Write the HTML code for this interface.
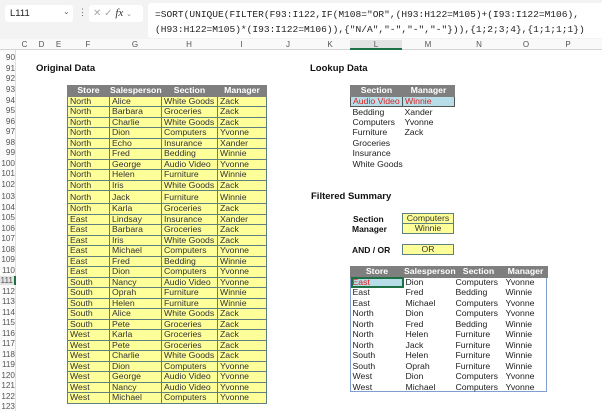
<!DOCTYPE html>
<html><head><meta charset="utf-8"><style>
*{margin:0;padding:0;box-sizing:border-box}
body{width:602px;height:411px;overflow:hidden;background:#fff;font-family:"Liberation Sans",Arial,sans-serif;position:relative;font-size:8.5px;color:#222}
.a{position:absolute}
.top{left:0;top:0;width:602px;height:39px;background:#f3f3f3}
.nb{left:5px;top:5px;width:68px;height:17px;background:#fff;border-radius:3px;font-size:9.5px;padding:3px 0 0 5px;color:#222}
.ib{left:89px;top:5px;width:54px;height:17px;background:#fff;border-radius:3px;color:#aaa;font-size:10px;padding:2px 0 0 4px}
.fb{left:148px;top:3px;width:454px;height:35px;background:#fff;border-radius:3px 0 0 3px}
.ft{left:155px;font-family:"Liberation Mono",monospace;font-size:9.55px;color:#222;white-space:pre}
.ch{left:0;top:39px;width:602px;height:11px;background:#f9f9f9;border-bottom:1px solid #d4d4d4}
.cl{top:40px;font-size:8px;color:#555;text-align:center}
.rh{left:0;top:50px;width:16px;height:361px;background:#fbfbfb;border-right:1px solid #e0e0e0}
.rn{left:0;width:15px;text-align:right;font-size:8.2px;color:#555}
table{border-collapse:collapse;position:absolute;table-layout:fixed}
td{font-size:8.7px;line-height:9px;padding:0 2px;white-space:nowrap;overflow:hidden}
.od td{background:#ffff99;border:1px solid #5f8080;color:#333}
th{background:#7f7f7f;color:#fff;font-weight:bold;font-size:8.7px;line-height:9px;text-align:center;border:1px solid #7f7f7f}
.title{font-weight:bold;font-size:9.5px;color:#111}
.lk td{color:#222;border:none}
.box{background:#ffff99;border:1px solid #5f8080;text-align:center;font-size:8.7px;line-height:9px;color:#333}
.lab{font-weight:bold;font-size:8.5px;color:#111}
.fs td{color:#222;border:none}
</style></head><body>
<div class="a top"></div>
<div class="a nb">L111<span style="position:absolute;left:58px;top:2px;color:#666;font-size:8px">⌄</span></div>
<div class="a" style="left:78px;top:7px;color:#666;font-size:9px">⋮</div>
<div class="a ib">✕ ✓ <i style="color:#333;font-family:'Liberation Serif',serif;font-size:11px">fx</i> <span style="font-size:7px;color:#888">⌄</span></div>
<div class="a fb"></div>
<div class="a ft" style="top:9px">=SORT(UNIQUE(FILTER(F93:I122,IF(M108="OR",(H93:H122=M105)+(I93:I122=M106),</div>
<div class="a ft" style="top:24px">(H93:H122=M105)*(I93:I122=M106)),{"N/A","-","-","-"})),{1;2;3;4},{1;1;1;1})</div>
<div class="a ch"></div>
<div class="a cl" style="left:16px;width:17px">C</div>
<div class="a cl" style="left:33px;width:17px">D</div>
<div class="a cl" style="left:50px;width:17px">E</div>
<div class="a cl" style="left:67px;width:42px">F</div>
<div class="a cl" style="left:109px;width:52px">G</div>
<div class="a cl" style="left:161px;width:56px">H</div>
<div class="a cl" style="left:217px;width:49px">I</div>
<div class="a cl" style="left:266px;width:44px">J</div>
<div class="a cl" style="left:310px;width:40px">K</div>
<div class="a cl" style="left:350px;width:52px;background:#e3e3e3;height:10px;border-bottom:2px solid #1e7145">L</div>
<div class="a cl" style="left:402px;width:52px">M</div>
<div class="a cl" style="left:454px;width:50px">N</div>
<div class="a cl" style="left:504px;width:44px">O</div>
<div class="a cl" style="left:548px;width:40px">P</div>
<div class="a rh"></div>
<div class="a rn" style="top:53px">90</div>
<div class="a rn" style="top:63.5px">91</div>
<div class="a rn" style="top:74px">92</div>
<div class="a rn" style="top:85px">93</div>
<div class="a rn" style="top:95.5px">94</div>
<div class="a rn" style="top:106px">95</div>
<div class="a rn" style="top:116.5px">96</div>
<div class="a rn" style="top:127px">97</div>
<div class="a rn" style="top:137.5px">98</div>
<div class="a rn" style="top:148px">99</div>
<div class="a rn" style="top:158.5px">100</div>
<div class="a rn" style="top:169px">101</div>
<div class="a rn" style="top:179.5px">102</div>
<div class="a rn" style="top:191.5px">103</div>
<div class="a rn" style="top:202.5px">104</div>
<div class="a rn" style="top:213px">105</div>
<div class="a rn" style="top:223.5px">106</div>
<div class="a rn" style="top:234px">107</div>
<div class="a rn" style="top:244.5px">108</div>
<div class="a rn" style="top:255px">109</div>
<div class="a rn" style="top:265.5px">110</div>
<div class="a rn" style="top:276px;border-right:2px solid #1e7145;width:16px;padding-right:1px;background:#e3e3e3">111</div>
<div class="a rn" style="top:286.5px">112</div>
<div class="a rn" style="top:297px">113</div>
<div class="a rn" style="top:307.5px">114</div>
<div class="a rn" style="top:318px">115</div>
<div class="a rn" style="top:328.5px">116</div>
<div class="a rn" style="top:339px">117</div>
<div class="a rn" style="top:349.5px">118</div>
<div class="a rn" style="top:360px">119</div>
<div class="a rn" style="top:370.5px">120</div>
<div class="a rn" style="top:381px">121</div>
<div class="a rn" style="top:391.5px">122</div>
<div class="a rn" style="top:402px">123</div>

<div class="a title" style="left:36px;top:63px">Original Data</div>
<div class="a title" style="left:310px;top:63px">Lookup Data</div>
<div class="a title" style="left:311px;top:191px">Filtered Summary</div>

<table class="od" style="left:67px;top:85px;width:199px">
<colgroup><col style="width:42px"><col style="width:52px"><col style="width:56px"><col style="width:49px"></colgroup>
<tr style="height:10.5px"><th>Store</th><th>Salesperson</th><th>Section</th><th>Manager</th></tr>
<tr style="height:10.5px"><td>North</td><td>Alice</td><td>White Goods</td><td>Zack</td></tr>
<tr style="height:10.5px"><td>North</td><td>Barbara</td><td>Groceries</td><td>Zack</td></tr>
<tr style="height:10.5px"><td>North</td><td>Charlie</td><td>White Goods</td><td>Zack</td></tr>
<tr style="height:10.5px"><td>North</td><td>Dion</td><td>Computers</td><td>Yvonne</td></tr>
<tr style="height:10.5px"><td>North</td><td>Echo</td><td>Insurance</td><td>Xander</td></tr>
<tr style="height:10.5px"><td>North</td><td>Fred</td><td>Bedding</td><td>Winnie</td></tr>
<tr style="height:10.5px"><td>North</td><td>George</td><td>Audio Video</td><td>Yvonne</td></tr>
<tr style="height:10.5px"><td>North</td><td>Helen</td><td>Furniture</td><td>Winnie</td></tr>
<tr style="height:10.5px"><td>North</td><td>Iris</td><td>White Goods</td><td>Zack</td></tr>
<tr style="height:13px"><td>North</td><td>Jack</td><td>Furniture</td><td>Winnie</td></tr>
<tr style="height:10.5px"><td>North</td><td>Karla</td><td>Groceries</td><td>Zack</td></tr>
<tr style="height:10.5px"><td>East</td><td>Lindsay</td><td>Insurance</td><td>Xander</td></tr>
<tr style="height:10.5px"><td>East</td><td>Barbara</td><td>Groceries</td><td>Zack</td></tr>
<tr style="height:10.5px"><td>East</td><td>Iris</td><td>White Goods</td><td>Zack</td></tr>
<tr style="height:10.5px"><td>East</td><td>Michael</td><td>Computers</td><td>Yvonne</td></tr>
<tr style="height:10.5px"><td>East</td><td>Fred</td><td>Bedding</td><td>Winnie</td></tr>
<tr style="height:10.5px"><td>East</td><td>Dion</td><td>Computers</td><td>Yvonne</td></tr>
<tr style="height:10.5px"><td>South</td><td>Nancy</td><td>Audio Video</td><td>Yvonne</td></tr>
<tr style="height:10.5px"><td>South</td><td>Oprah</td><td>Furniture</td><td>Winnie</td></tr>
<tr style="height:10.5px"><td>South</td><td>Helen</td><td>Furniture</td><td>Winnie</td></tr>
<tr style="height:10.5px"><td>South</td><td>Alice</td><td>White Goods</td><td>Zack</td></tr>
<tr style="height:10.5px"><td>South</td><td>Pete</td><td>Groceries</td><td>Zack</td></tr>
<tr style="height:10.5px"><td>West</td><td>Karla</td><td>Groceries</td><td>Zack</td></tr>
<tr style="height:10.5px"><td>West</td><td>Pete</td><td>Groceries</td><td>Zack</td></tr>
<tr style="height:10.5px"><td>West</td><td>Charlie</td><td>White Goods</td><td>Zack</td></tr>
<tr style="height:10.5px"><td>West</td><td>Dion</td><td>Computers</td><td>Yvonne</td></tr>
<tr style="height:10.5px"><td>West</td><td>George</td><td>Audio Video</td><td>Yvonne</td></tr>
<tr style="height:10.5px"><td>West</td><td>Nancy</td><td>Audio Video</td><td>Yvonne</td></tr>
<tr style="height:10.5px"><td>West</td><td>Michael</td><td>Computers</td><td>Yvonne</td></tr>
</table>

<table class="lk" style="left:350px;top:85px;width:104px">
<colgroup><col style="width:52px"><col style="width:52px"></colgroup>
<tr style="height:10.5px"><th>Section</th><th>Manager</th></tr>
<tr style="height:10.5px"><td style="background:#b7dee8;color:#e02020;border:1px solid #555">Audio Video</td><td style="background:#b7dee8;color:#e02020;border:1px solid #555">Winnie</td></tr>
<tr style="height:10.5px"><td>Bedding</td><td>Xander</td></tr>
<tr style="height:10.5px"><td>Computers</td><td>Yvonne</td></tr>
<tr style="height:10.5px"><td>Furniture</td><td>Zack</td></tr>
<tr style="height:10.5px"><td>Groceries</td><td></td></tr>
<tr style="height:10.5px"><td>Insurance</td><td></td></tr>
<tr style="height:10.5px"><td>White Goods</td><td></td></tr>
</table>

<div class="a lab" style="left:353px;top:214px">Section</div>
<div class="a lab" style="left:352px;top:224px">Manager</div>
<div class="a lab" style="left:352px;top:245px">AND / OR</div>
<div class="a box" style="left:402px;top:213px;width:52px;height:11px">Computers</div>
<div class="a box" style="left:402px;top:223px;width:52px;height:11px">Winnie</div>
<div class="a box" style="left:402px;top:244px;width:52px;height:11px">OR</div>

<div class="a" style="left:350px;top:276px;width:197px;height:116px;border:1px solid #7f9fd0"></div>
<table class="fs" style="left:350px;top:266px;width:197px">
<colgroup><col style="width:53px"><col style="width:50px"><col style="width:50px"><col style="width:44px"></colgroup>
<tr style="height:10.5px"><th>Store</th><th>Salesperson</th><th>Section</th><th>Manager</th></tr>
<tr style="height:10.5px"><td style="background:#b7dee8;color:#e02020;outline:2px solid #1e7145;outline-offset:-2px">East</td><td>Dion</td><td>Computers</td><td>Yvonne</td></tr>
<tr style="height:10.5px"><td>East</td><td>Fred</td><td>Bedding</td><td>Winnie</td></tr>
<tr style="height:10.5px"><td>East</td><td>Michael</td><td>Computers</td><td>Yvonne</td></tr>
<tr style="height:10.5px"><td>North</td><td>Dion</td><td>Computers</td><td>Yvonne</td></tr>
<tr style="height:10.5px"><td>North</td><td>Fred</td><td>Bedding</td><td>Winnie</td></tr>
<tr style="height:10.5px"><td>North</td><td>Helen</td><td>Furniture</td><td>Winnie</td></tr>
<tr style="height:10.5px"><td>North</td><td>Jack</td><td>Furniture</td><td>Winnie</td></tr>
<tr style="height:10.5px"><td>South</td><td>Helen</td><td>Furniture</td><td>Winnie</td></tr>
<tr style="height:10.5px"><td>South</td><td>Oprah</td><td>Furniture</td><td>Winnie</td></tr>
<tr style="height:10.5px"><td>West</td><td>Dion</td><td>Computers</td><td>Yvonne</td></tr>
<tr style="height:10.5px"><td>West</td><td>Michael</td><td>Computers</td><td>Yvonne</td></tr>
</table>
</body></html>
